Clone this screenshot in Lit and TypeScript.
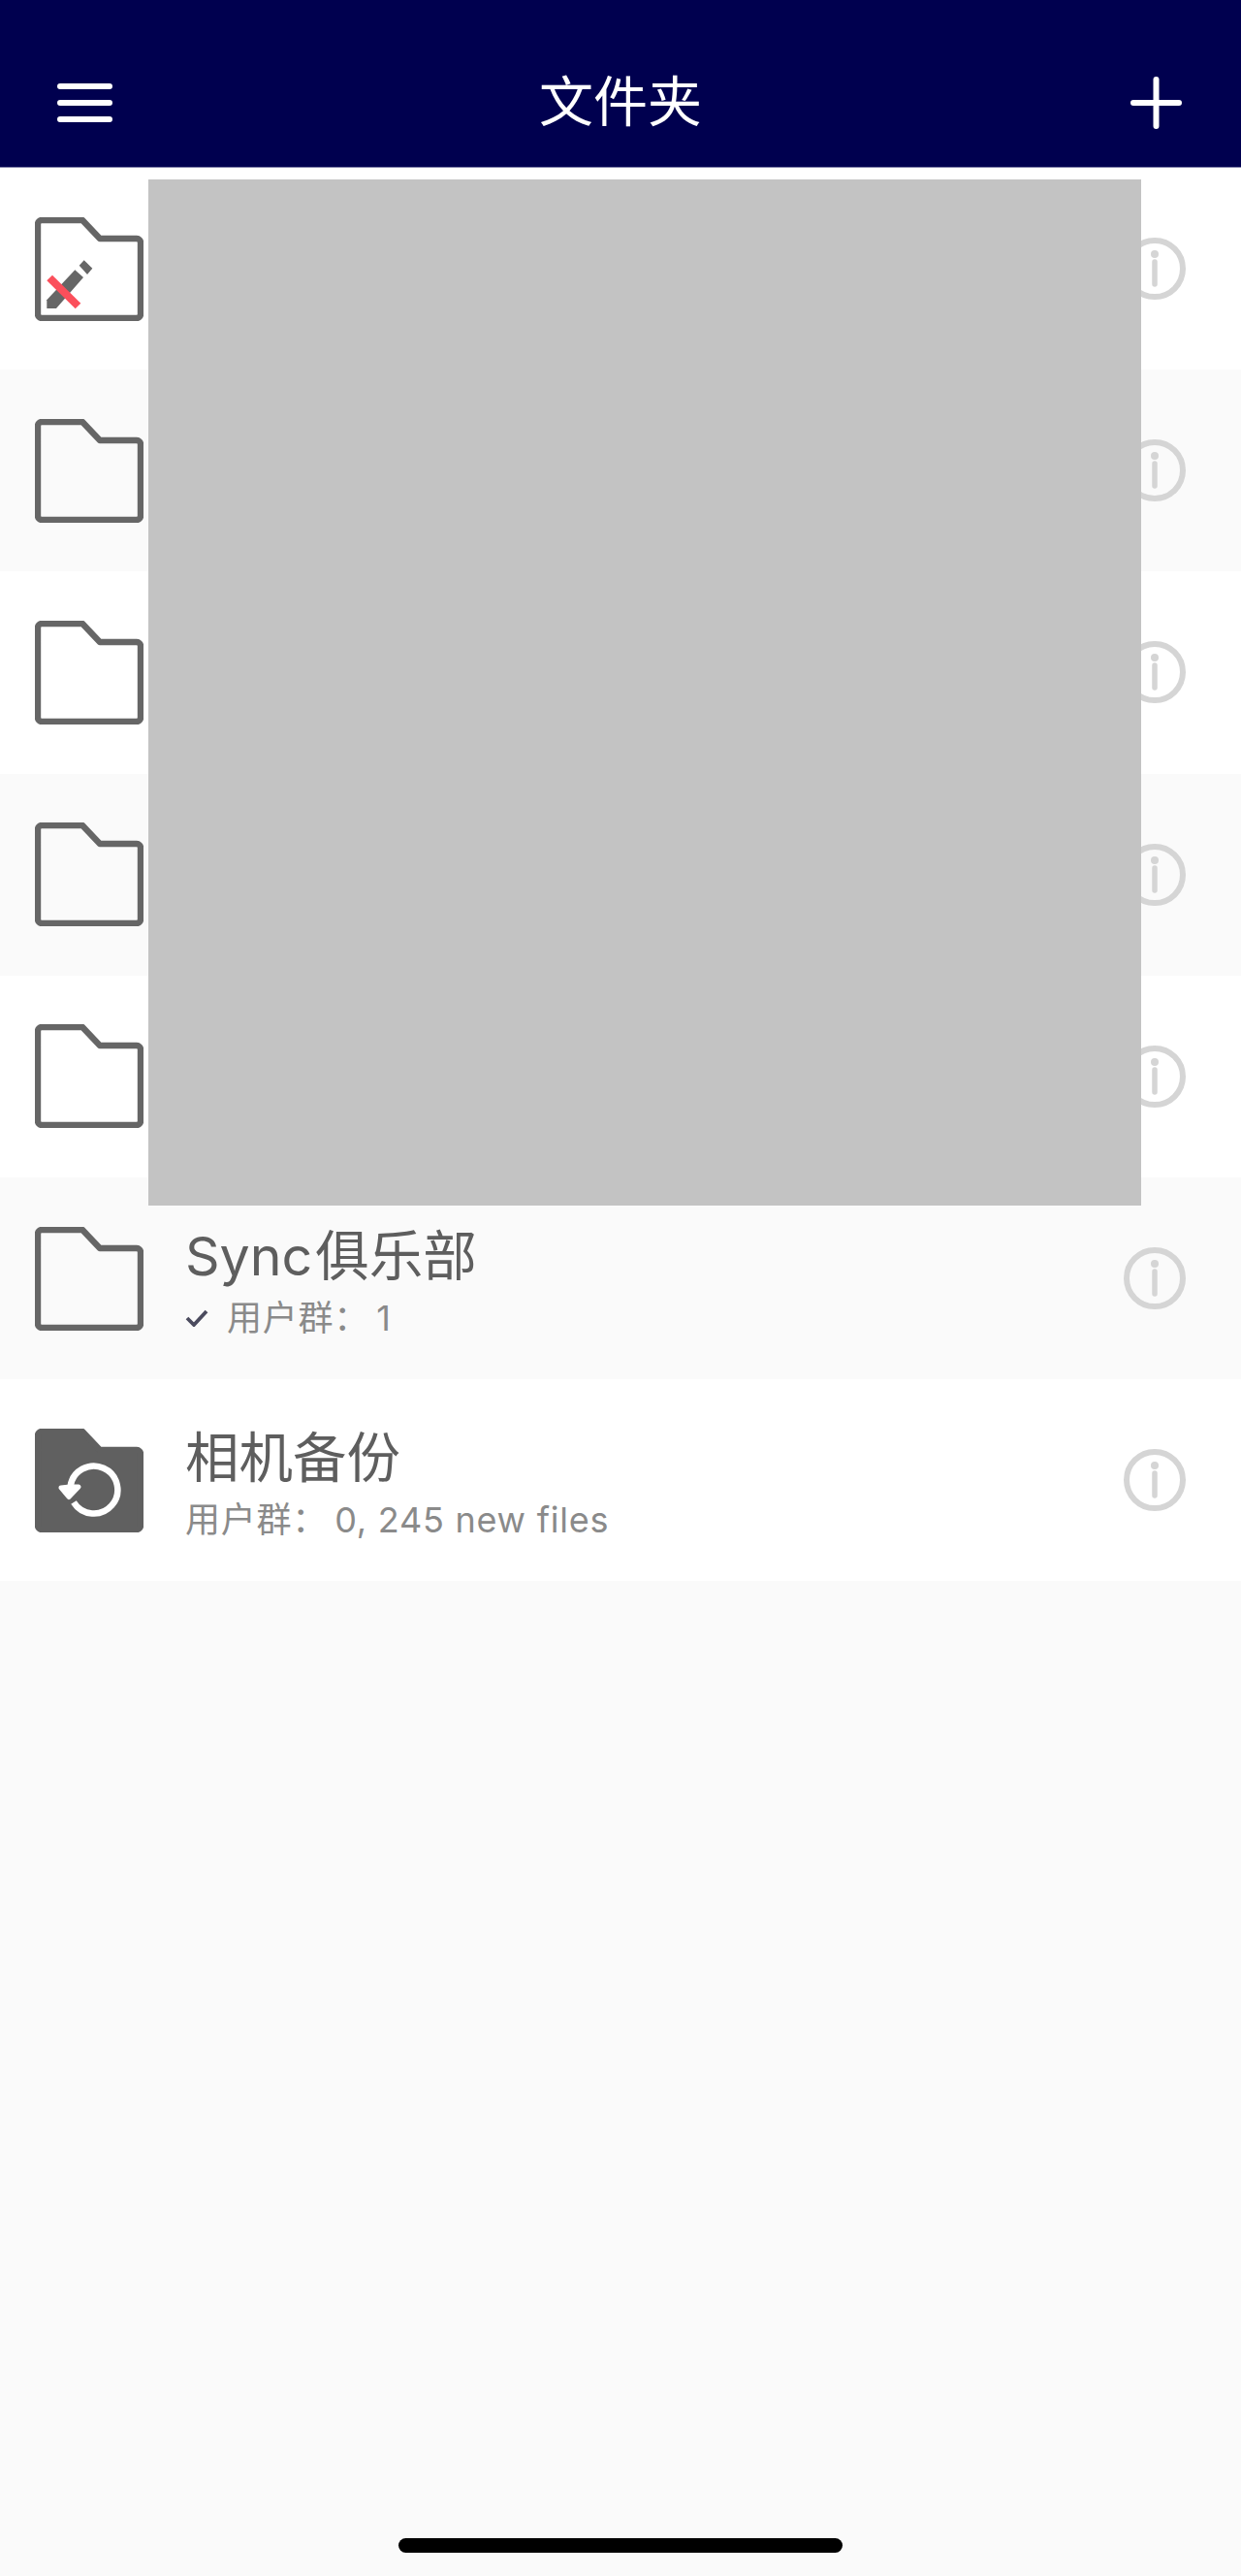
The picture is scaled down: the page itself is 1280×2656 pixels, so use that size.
import { LitElement, html, css, svg } from "lit";
import { customElement } from "lit/decorators.js";

const FOLDER = "M3 7a4 4 0 0 1 4-4H49L67 22H105a4 4 0 0 1 4 4V100a4 4 0 0 1-4 4H7a4 4 0 0 1-4-4Z";

type Kind = "edit" | "plain" | "backup";
interface Row { kind: Kind; latin?: string; title?: string; sub?: string; check?: boolean; }

const ROWS: Row[] = [
  { kind: "edit" },
  { kind: "plain" },
  { kind: "plain" },
  { kind: "plain" },
  { kind: "plain" },
  { kind: "plain", latin: "Sync", title: "俱乐部", sub: "用户群：\u20091", check: true },
  { kind: "backup", title: "相机备份", sub: "用户群：\u20090, 245 new files" },
];

function folderIcon(kind: Kind) {
  const filled = kind === "backup";
  const ink = filled ? "#606060" : "#666666";
  return html`<svg class="folder" viewBox="0 0 112 107" width="112" height="107">
    <path d=${FOLDER} fill=${filled ? ink : "none"} stroke=${ink} stroke-width="6.4" stroke-linejoin="round"></path>
    ${kind === "edit"
      ? svg`<polygon points="12.3,85.3 12.3,94 22,94 50,62 41.3,54.3" fill="#666666"></polygon>
          <polygon points="45.7,49.7 50.7,44.3 59.3,52.7 54,59" fill="#666666"></polygon>
          <polygon points="12.3,65.3 18,59.7 47.3,88.7 41.7,94.3" fill="#fb4f5b"></polygon>`
      : ""}
    ${kind === "backup"
      ? svg`<path d="M36.5 60A24.5 24.5 0 1 1 40 76" fill="none" stroke="#fff" stroke-width="6.5"></path>
          <polygon points="27,61 35,70.5 45,60 36,60" fill="#fff" stroke="#fff" stroke-width="5" stroke-linejoin="round"></polygon>`
      : ""}
  </svg>`;
}

@customElement("app-root")
export class AppRoot extends LitElement {
  static styles = css`
    :host {
      display: flex;
      flex-direction: column;
      position: relative;
      min-height: 2656px;
      background: #fafafa;
      font-family: Inter, "Noto Sans CJK SC", "Noto Sans", sans-serif;
    }
    .header {
      box-sizing: border-box;
      height: 173px;
      padding: 38px 59px 1px;
      display: flex;
      align-items: center;
      background: #00004f;
      border-bottom: 1px solid #7f7fa7;
    }
    .header svg { flex: none; display: block; margin-top: 2px; }
    .title {
      flex: 1;
      text-align: center;
      color: #fff;
      font-size: 56px;
      line-height: 70px;
    }
    .row {
      box-sizing: border-box;
      height: 208.2px;
      padding: 0 57px 0 36px;
      display: flex;
      align-items: center;
    }
    .row.odd { background: #fff; }
    .row.even { background: #fafafa; }
    .folder { flex: none; display: block; }
    .text {
      flex: 1;
      min-width: 0;
      margin-left: 43px;
      padding-top: 7px;
    }
    .name {
      color: #5e5e5e;
      font-size: 55.5px;
      line-height: 70px;
    }
    .latin { margin-right: 3px; }
    .sub {
      display: flex;
      align-items: center;
      margin-top: 5px;
      color: #8a8a8a;
      font-size: 36px;
      line-height: 48px;
      letter-spacing: 0.75px;
      white-space: pre;
    }
    .check { flex: none; margin-right: 19px; display: block; }
    .info { flex: none; display: block; }
    .mask {
      position: absolute;
      left: 153px;
      top: 185px;
      width: 1024px;
      height: 1058px;
      background: #c3c3c3;
    }
    .home {
      align-self: center;
      width: 458px;
      height: 15px;
      margin-top: auto;
      margin-bottom: 24px;
      border-radius: 8px;
      background: #000;
    }
  `;

  render() {
    return html`
      <div class="header">
        <svg viewBox="0 0 57 40" width="57" height="40">
          <path d="M3 3H54M3 20H54M3 37H54" stroke="#fff" stroke-width="6" stroke-linecap="round"></path>
        </svg>
        <div class="title">文件夹</div>
        <svg viewBox="0 0 57 54" width="57" height="54">
          <path d="M28.5 3V51M5 27H52" stroke="#fff" stroke-width="6" stroke-linecap="round"></path>
        </svg>
      </div>
      ${ROWS.map(
        (r, i) => html`
          <div class="row ${i % 2 === 0 ? "odd" : "even"}">
            ${folderIcon(r.kind)}
            <div class="text">
              ${r.title
                ? html`<div class="name">${r.latin ? html`<span class="latin">${r.latin}</span>` : ""}${r.title}</div>`
                : ""}
              ${r.sub
                ? html`<div class="sub">${r.check
                    ? html`<svg class="check" viewBox="0 0 24 18" width="24" height="18">
                        <path d="M2 9L9 16L22 2" fill="none" stroke="#4b4b5e" stroke-width="3.8"></path>
                      </svg>`
                    : ""}<span>${r.sub}</span></div>`
                : ""}
            </div>
            <svg class="info" viewBox="0 0 64 64" width="64" height="64">
              <circle cx="32" cy="32" r="29" fill="none" stroke="#d5d5d5" stroke-width="6"></circle>
              <circle cx="32" cy="17" r="4" fill="#d5d5d5"></circle>
              <path d="M32 25V48" stroke="#d5d5d5" stroke-width="5.5" stroke-linecap="round"></path>
            </svg>
          </div>
        `
      )}
      <div class="mask"></div>
      <div class="home"></div>
    `;
  }
}
